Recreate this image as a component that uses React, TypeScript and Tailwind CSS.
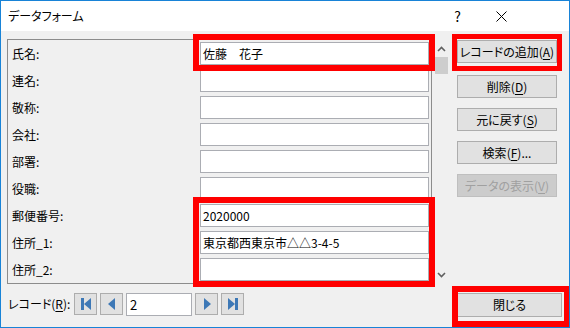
import React from 'react'

const FONT = { fontFamily: '"Noto Sans CJK JP", "Noto Sans", sans-serif' }

const fields: { label: string; value: string }[] = [
  { label: '氏名:', value: '佐藤　花子' },
  { label: '連名:', value: '' },
  { label: '敬称:', value: '' },
  { label: '会社:', value: '' },
  { label: '部署:', value: '' },
  { label: '役職:', value: '' },
  { label: '郵便番号:', value: '2020000' },
  { label: '住所_1:', value: '東京都西東京市△△3-4-5' },
  { label: '住所_2:', value: '' },
]

function Btn({ label, u, rest, disabled, top }: { label: string; u?: string; rest?: string; disabled?: boolean; top?: string }) {
  return (
    <div
      className={`h-[23px] w-[100px] flex items-center justify-center whitespace-nowrap text-[12px] leading-none border ${top ?? ''} ${
        disabled
          ? 'bg-[#cccccc] border-[#bfbfbf] text-[#a0a0a0]'
          : 'bg-[#e1e1e1] border-[#adadad] text-black'
      }`}
    >
      {label}
      {u && (
        <>
          (<span className="underline underline-offset-2">{u}</span>){rest}
        </>
      )}
    </div>
  )
}

function NavBtn({ kind }: { kind: 'first' | 'prev' | 'next' | 'last' }) {
  return (
    <div className="w-[23px] h-[22px] bg-[#e1e1e1] border border-[#adadad] flex items-center justify-center">
      <svg width="14" height="14" viewBox="0 0 14 14">
        {kind === 'first' && (
          <>
            <rect x="2" y="1" width="3" height="12" fill="#3d78b6" />
            <path d="M12 1 L5 7 L12 13 Z" fill="#3d78b6" />
          </>
        )}
        {kind === 'prev' && <path d="M10 1 L3 7 L10 13 Z" fill="#3d78b6" />}
        {kind === 'next' && <path d="M4 1 L11 7 L4 13 Z" fill="#3d78b6" />}
        {kind === 'last' && (
          <>
            <path d="M2 1 L9 7 L2 13 Z" fill="#3d78b6" />
            <rect x="9" y="1" width="3" height="12" fill="#3d78b6" />
          </>
        )}
      </svg>
    </div>
  )
}

export default function App() {
  return (
    <div
      className="relative w-[570px] h-[328px] border border-[#1883d7] bg-[#f0f0f0] overflow-hidden text-black [font-feature-settings:'palt']"
      style={FONT}
    >
      {/* タイトルバー */}
      <div className="h-[30px] bg-white flex items-center pl-[7px] text-[12px]">
        <span>データフォーム</span>
        <span className="ml-auto mr-[35px] text-[14px]">?</span>
        <svg width="11" height="11" viewBox="0 0 11 11" className="mr-[62px]">
          <path d="M0.5 0.5 L10.5 10.5 M10.5 0.5 L0.5 10.5" stroke="#000" strokeWidth="1" />
        </svg>
      </div>

      {/* 本体 */}
      <div className="flex items-start pt-[8px] pl-[6px]">
        <div className="w-[425px] h-[245px] border border-[#8c8c8c] pt-[2px] flex flex-col gap-[4px]">
          {fields.map((f) => (
            <div key={f.label} className="flex items-center h-[23px]">
              <div className="w-[192px] pl-[4px] text-[12px] leading-none whitespace-nowrap">{f.label}</div>
              <div className="w-[229px] h-[23px] bg-white border border-[#abadb3] flex items-center pl-[2px] text-[12px] leading-none whitespace-nowrap">
                {f.value}
              </div>
            </div>
          ))}
        </div>

        {/* スクロールバー */}
        <div className="ml-[1px] mt-[1px] w-[17px] h-[243px] flex flex-col items-center">
          <div className="h-[17px] w-full flex items-center justify-center">
            <svg width="9" height="6" viewBox="0 0 9 6">
              <path d="M1 5 L4.5 1.5 L8 5" stroke="#606060" strokeWidth="1.6" fill="none" />
            </svg>
          </div>
          <div className="h-[17px] w-[13px] bg-[#cdcdcd]" />
          <div className="flex-1" />
          <div className="h-[17px] w-full flex items-center justify-center">
            <svg width="9" height="6" viewBox="0 0 9 6">
              <path d="M1 1 L4.5 4.5 L8 1" stroke="#606060" strokeWidth="1.6" fill="none" />
            </svg>
          </div>
        </div>

        {/* ボタン */}
        <div className="ml-[7px] mt-[1px] flex flex-col">
          <Btn label="レコードの追加" u="A" />
          <Btn label="削除" u="D" top="mt-[12px]" />
          <Btn label="元に戻す" u="S" top="mt-[10px]" />
          <Btn label="検索" u="F" rest="..." top="mt-[10px]" />
          <Btn label="データの表示" u="V" disabled top="mt-[10px]" />
        </div>
      </div>

      {/* 下部 */}
      <div className="flex items-start mt-[9px] pl-[7px] pr-[7px]">
        <div className="w-[66px] h-[22px] flex items-center text-[12px] leading-none whitespace-nowrap">
          レコード(<span className="underline underline-offset-2">R</span>):
        </div>
        <div className="flex items-start gap-[3px]">
          <NavBtn kind="first" />
          <NavBtn kind="prev" />
          <div className="w-[66px] h-[23px] bg-white border border-[#abadb3] flex items-center pl-[3px] text-[13px] leading-none">
            2
          </div>
          <NavBtn kind="next" />
          <NavBtn kind="last" />
        </div>
        <div className="ml-auto w-[105px] h-[24px] bg-[#e1e1e1] border border-[#adadad] flex items-center justify-center text-[12px] leading-none">
          閉じる
        </div>
      </div>

      {/* 赤枠 */}
      <div className="absolute left-[192px] top-[33px] w-[242px] h-[37px] border-[6px] border-[#ff0000]" />
      <div className="absolute left-[192px] top-[196px] w-[242px] h-[90px] border-[6px] border-[#ff0000]" />
      <div className="absolute left-[451px] top-[33px] w-[110px] h-[37px] border-[5px] border-[#ff0000]" />
      <div className="absolute left-[451px] top-[285px] w-[118px] h-[41px] border-[6px] border-[#ff0000]" />
    </div>
  )
}
